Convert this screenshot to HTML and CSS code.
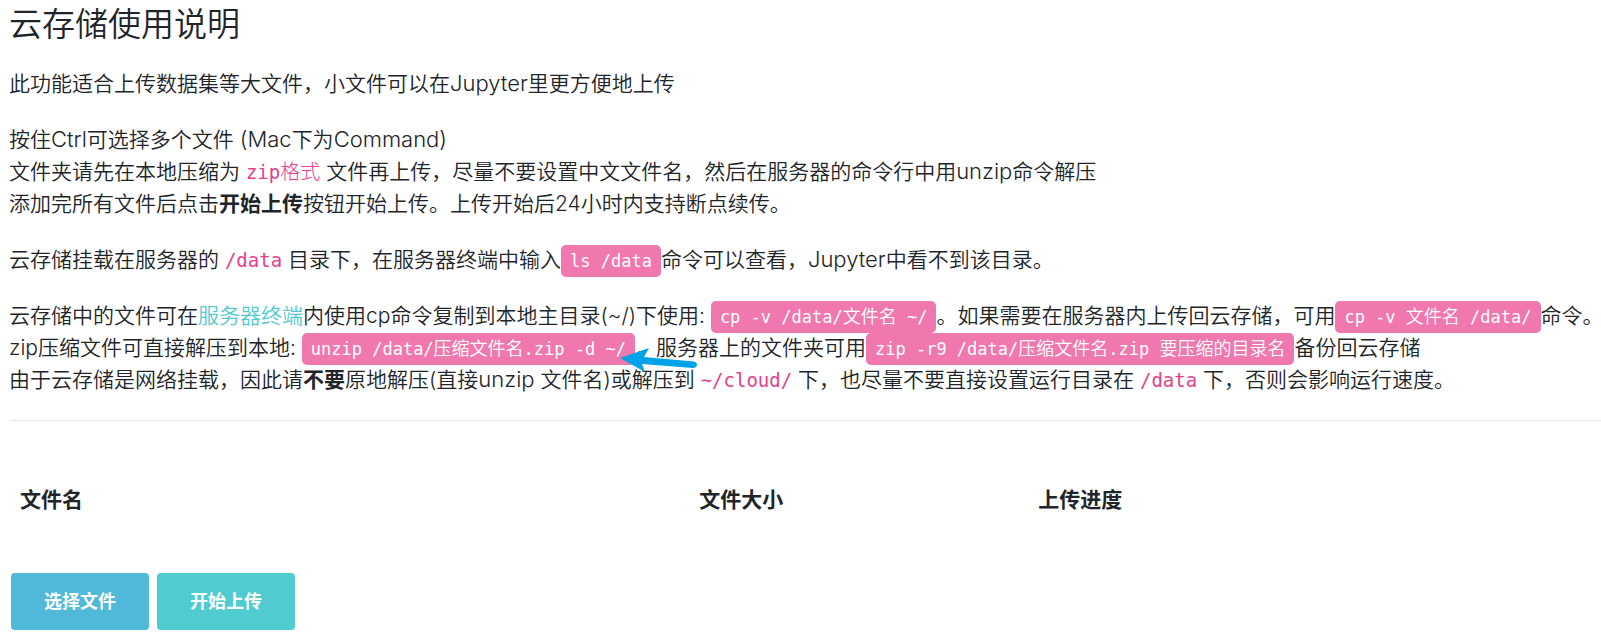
FILE: index.html
```html
<!DOCTYPE html>
<html lang="zh-CN">
<head>
<meta charset="utf-8">
<meta name="viewport" content="width=device-width, initial-scale=1">
<title>云存储使用说明</title>
<link rel="stylesheet" href="styles.css">
</head>
<body>
<main class="page">
  <h1 class="title">云存储使用说明</h1>
  <p>此功能适合上传数据集等大文件，小文件可以在<span class="latin">Jupyter</span>里更方便地上传</p>
  <p>按住<span class="latin">Ctrl</span>可选择多个文件 <span class="latin">(Mac</span>下为<span class="latin">Command)</span><br>
    文件夹请先在本地压缩为 <code>zip<span class="han">格式</span></code> 文件再上传，尽量不要设置中文文件名，然后在服务器的命令行中用<span class="latin">unzip</span>命令解压<br>
    添加完所有文件后点击<strong>开始上传</strong>按钮开始上传。上传开始后24小时内支持断点续传。</p>
  <p>云存储挂载在服务器的 <code>/data</code> 目录下，在服务器终端中输入<kbd>ls /data</kbd>命令可以查看，<span class="latin">Jupyter</span>中看不到该目录。</p>
  <p>云存储中的文件可在<a class="link" href="#terminal">服务器终端</a>内使用cp命令复制到本地主目录(~/)下使用: <kbd>cp -v /data/<span class="han">文件名</span> ~/</kbd>。如果需要在服务器内上传回云存储，可用<kbd>cp -v <span class="han">文件名</span> /data/</kbd>命令。<br>
    zip压缩文件可直接解压到本地: <kbd>unzip /data/<span class="han">压缩文件名</span>.zip -d ~/</kbd><span class="marked">，<svg class="arrow" viewBox="0 0 80 28" aria-hidden="true"><path d="M1 11 L30 1 L25 10 L75 14.500 Q78 15 78 18 Q77 21 74 21 L23 17 L26 25 Z"/></svg></span>服务器上的文件夹可用<kbd>zip -r9 /data/<span class="han">压缩文件名</span>.zip <span class="han">要压缩的目录名</span></kbd>备份回云存储<br>
    由于云存储是网络挂载，因此请<strong>不要</strong>原地解压(直接<span class="latin">unzip</span> 文件名)或解压到 <code>~/cloud/</code> 下，也尽量不要直接设置运行目录在 <code>/data</code> 下，否则会影响运行速度。</p>
  <section class="upload" aria-label="上传">
    <hr class="divider">
    <table class="files">
      <thead>
        <tr><th class="name" scope="col">文件名</th><th class="size" scope="col">文件大小</th><th scope="col">上传进度</th></tr>
      </thead>
    </table>
    <div class="actions">
      <button class="btn btn-pick" type="button">选择文件</button>
      <button class="btn btn-start" type="button">开始上传</button>
    </div>
  </section>
</main>
</body>
</html>
```
FILE: styles.css
```css
* { box-sizing: border-box; }
body {
  margin: 0;
  background: #fff;
  color: #212529;
  font-family: Inter, "Noto Sans CJK SC", sans-serif;
  font-size: 21px;
  font-weight: 350;
  line-height: 32px;
}
.page { padding: 4px 0 12px 9px; overflow-x: clip; }
.title {
  margin: 0 0 24px;
  font-size: 33px;
  font-weight: 350;
  line-height: 40px;
}
p { margin: 0 0 24px; white-space: nowrap; }
strong { font-weight: 700; }
.latin { font-size: 22px; font-weight: 300; line-height: 1; }
.link { color: #50cbcf; text-decoration: none; }
code, kbd {
  font-family: "DejaVu Sans Mono", "Noto Sans CJK SC", monospace;
  font-weight: 400;
  line-height: 1;
}
code { font-size: 19px; color: #e83e8c; }
code .han { font-size: 20px; font-weight: 300; }
kbd {
  padding: 6px 9px;
  border-radius: 5px;
  background: #f078ae;
  color: #fff;
  font-size: 17px;
}
kbd .han { font-size: 18px; font-weight: 350; }
.marked { position: relative; }
.arrow {
  position: absolute;
  left: -16px;
  top: 12px;
  width: 80px;
  height: 28px;
  fill: #00a2e8;
}
.upload { padding-left: 1px; }
.divider {
  margin: 0 0 47px;
  border: 0;
  border-top: 1px solid #e5e5e5;
}
.files { width: 100%; table-layout: fixed; border-collapse: collapse; }
.files th { padding: 16px 10px; text-align: left; font-weight: 700; }
.name { width: 42.7%; }
.size { width: 21.3%; }
.actions { display: flex; gap: 8px; padding: 41px 1px 0; }
.btn {
  padding: 15px 33px;
  border: 0;
  border-radius: 4px;
  color: #fff;
  font: inherit;
  font-size: 18px;
  font-weight: 700;
  line-height: 27px;
}
.btn-pick { background: #50b9da; }
.btn-start { background: #50cbcf; }
```
